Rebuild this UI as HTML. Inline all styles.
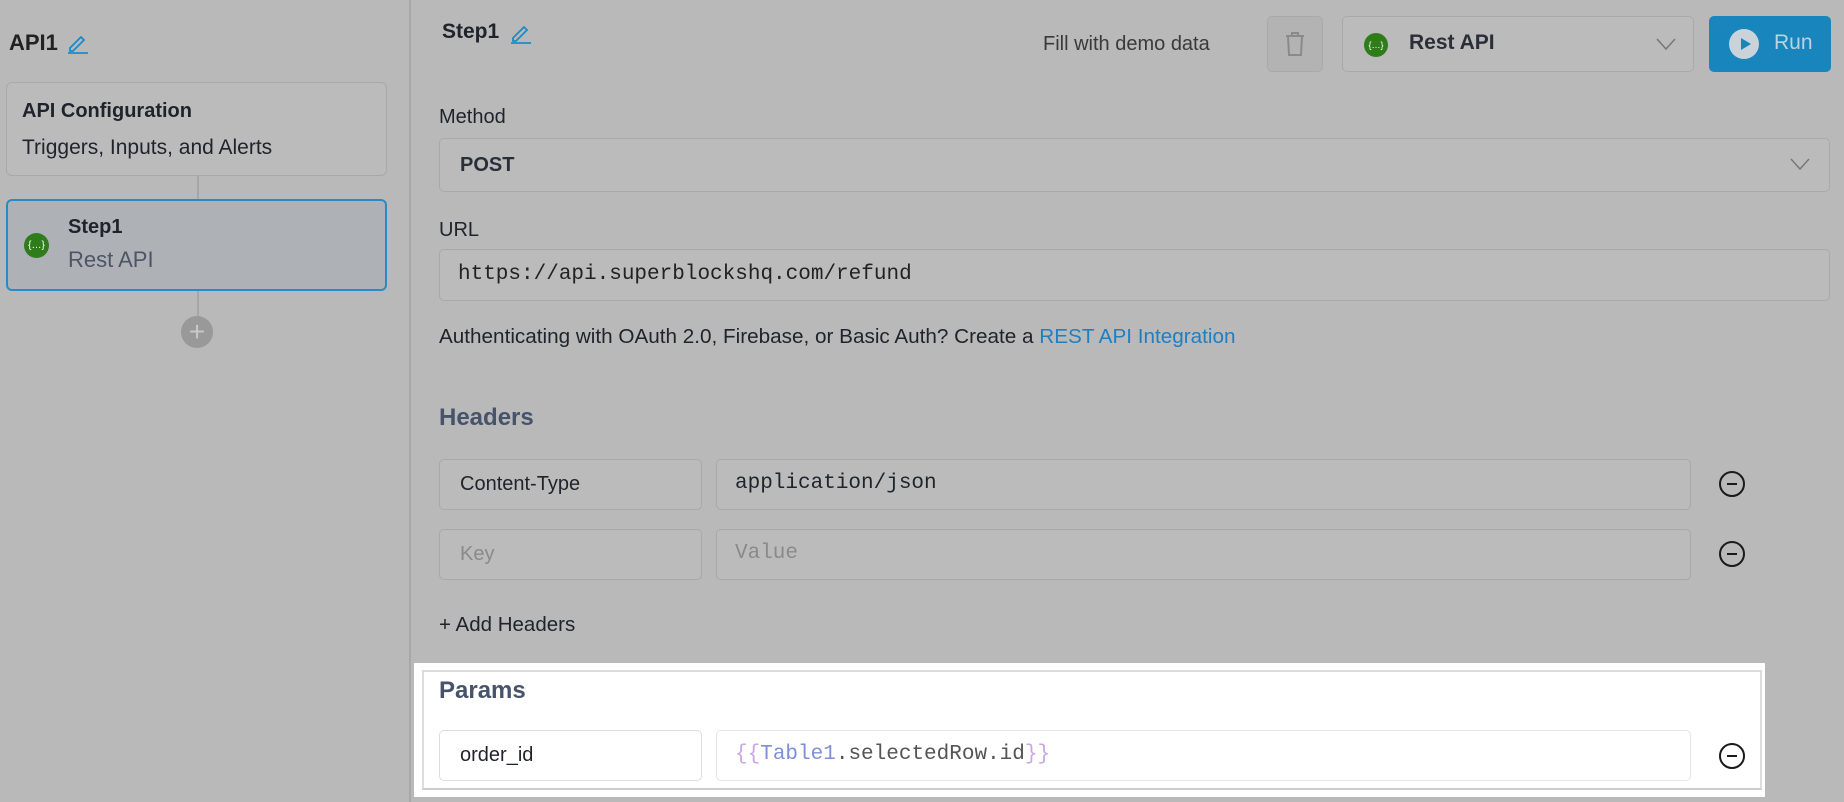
<!DOCTYPE html>
<html><head><meta charset="utf-8"><style>
*{box-sizing:border-box;margin:0;padding:0}
body{width:1844px;height:802px;background:#b9b9b9;font-family:"Liberation Sans",sans-serif;color:#1f232b;position:relative;overflow:hidden}
.a{position:absolute;white-space:nowrap}
.box{position:absolute;border:1.5px solid #a9a9a9;border-radius:5px;background:#bbbbbb}
.mono{font-family:"Liberation Mono",monospace}
.minus{position:absolute;width:26px;height:26px;border:2px solid #1a1a1a;border-radius:50%}
.minus:after{content:"";position:absolute;left:6px;right:6px;top:10px;height:2px;background:#1a1a1a}
.lbl{font-size:20px}
</style></head><body>
<div class="a" style="left:409px;top:0;width:2px;height:802px;background:#a8a8a8"></div>
<div class="a" style="left:9px;top:30px;font-size:22px;font-weight:bold;color:#222">API1</div>
<svg class="a" style="left:66px;top:31px" width="24" height="24" viewBox="0 0 24 24" fill="none" stroke="#1e8ac6" stroke-width="1.8"><path d="M4 17 L15 6 L18 9 L7 20 L4 20 Z"/><path d="M2 22 H22"/></svg>
<div class="box" style="left:6px;top:82px;width:381px;height:94px;border-radius:6px"></div>
<div class="a" style="left:22px;top:100px;font-size:20px;font-weight:bold">API Configuration</div>
<div class="a" style="left:22px;top:136px;font-size:21px">Triggers, Inputs, and Alerts</div>
<div class="a" style="left:197px;top:176px;width:2px;height:24px;background:#a6a6a6"></div>
<div class="a" style="left:6px;top:199px;width:381px;height:92px;border:2px solid #2a8bc4;border-radius:6px;background:#aeb2b7"></div>
<div class="a" style="left:24px;top:233px;width:25px;height:25px;border-radius:50%;background:#2e7d1a;color:#fff;font-size:10px;text-align:center;line-height:25px">{…}</div>
<div class="a" style="left:68px;top:216px;font-size:20px;font-weight:bold">Step1</div>
<div class="a" style="left:68px;top:247px;font-size:22px;color:#4d5566">Rest API</div>
<div class="a" style="left:197px;top:291px;width:2px;height:27px;background:#a6a6a6"></div>
<div class="a" style="left:181px;top:316px;width:32px;height:32px;border-radius:50%;background:#999;color:#c8c8c8;font-size:28px;text-align:center;line-height:31px">+</div>

<div class="a" style="left:442px;top:20px;font-size:21px;font-weight:bold">Step1</div>
<svg class="a" style="left:509px;top:21px" width="24" height="24" viewBox="0 0 24 24" fill="none" stroke="#1e8ac6" stroke-width="1.8"><path d="M4 17 L15 6 L18 9 L7 20 L4 20 Z"/><path d="M2 22 H22"/></svg>
<div class="a" style="left:1043px;top:33px;font-size:20px;color:#3a3a3a">Fill with demo data</div>
<div class="box" style="left:1267px;top:16px;width:56px;height:56px;background:#b3b3b3"></div>
<svg class="a" style="left:1283px;top:31px" width="24" height="26" viewBox="0 0 24 26" fill="none" stroke="#8a8a8a" stroke-width="2"><path d="M3 5 H21 M9 5 V2 H15 V5 M5 5 L6 24 H18 L19 5"/></svg>
<div class="box" style="left:1342px;top:16px;width:352px;height:56px"></div>
<div class="a" style="left:1364px;top:33px;width:24px;height:24px;border-radius:50%;background:#2e7d1a;color:#fff;font-size:9px;text-align:center;line-height:24px">{…}</div>
<div class="a" style="left:1409px;top:31px;font-size:21px;font-weight:bold;color:#2a2e38">Rest API</div>
<svg class="a" style="left:1656px;top:38px" width="20" height="12" viewBox="0 0 20 12" fill="none" stroke="#777" stroke-width="1.5"><path d="M1 1 L10 11 L19 1"/></svg>
<div class="a" style="left:1709px;top:16px;width:122px;height:56px;border-radius:5px;background:#1886bd"></div>
<div class="a" style="left:1729px;top:29px;width:30px;height:30px;border-radius:50%;background:#c9d3d9"></div>
<svg class="a" style="left:1740px;top:37px" width="12" height="14" viewBox="0 0 12 14"><path d="M1 1 L11 7 L1 13Z" fill="#1886bd"/></svg>
<div class="a" style="left:1774px;top:31px;font-size:21px;color:#bcd2e0">Run</div>

<div class="a lbl" style="left:439px;top:106px">Method</div>
<div class="box" style="left:439px;top:138px;width:1391px;height:54px"></div>
<div class="a" style="left:460px;top:154px;font-size:20px;font-weight:bold;color:#2a2e38">POST</div>
<svg class="a" style="left:1790px;top:158px" width="20" height="12" viewBox="0 0 20 12" fill="none" stroke="#777" stroke-width="1.5"><path d="M1 1 L10 11 L19 1"/></svg>
<div class="a lbl" style="left:439px;top:219px">URL</div>
<div class="box" style="left:439px;top:249px;width:1391px;height:52px"></div>
<div class="a mono" style="left:458px;top:263px;font-size:21px;color:#222">https://api.superblockshq.com/refund</div>
<div class="a" style="left:439px;top:325px;font-size:20.7px">Authenticating with OAuth 2.0, Firebase, or Basic Auth? Create a <span style="color:#1f7fbf">REST API Integration</span></div>
<div class="a" style="left:439px;top:404px;font-size:24px;font-weight:bold;color:#46536a">Headers</div>
<div class="box" style="left:439px;top:459px;width:263px;height:51px"></div>
<div class="a" style="left:460px;top:473px;font-size:20px">Content-Type</div>
<div class="box" style="left:716px;top:459px;width:975px;height:51px"></div>
<div class="a mono" style="left:735px;top:472px;font-size:21px">application/json</div>
<div class="minus" style="left:1719px;top:471px"></div>
<div class="box" style="left:439px;top:529px;width:263px;height:51px"></div>
<div class="a" style="left:460px;top:543px;font-size:20px;color:#8a8a8a">Key</div>
<div class="box" style="left:716px;top:529px;width:975px;height:51px"></div>
<div class="a mono" style="left:735px;top:542px;font-size:21px;color:#8a8a8a">Value</div>
<div class="minus" style="left:1719px;top:541px"></div>
<div class="a" style="left:439px;top:613px;font-size:20.5px">+ Add Headers</div>

<div class="a" style="left:414px;top:663px;width:1351px;height:134px;background:#fff"></div>
<div class="a" style="left:422px;top:670px;width:1340px;height:120px;border:2px solid #dcdcdc;border-bottom-color:#ccc"></div>
<div class="a" style="left:439px;top:677px;font-size:24px;font-weight:bold;color:#46536a">Params</div>
<div class="a" style="left:439px;top:730px;width:263px;height:51px;border:1.5px solid #ddd;border-radius:5px"></div>
<div class="a" style="left:460px;top:744px;font-size:20px">order_id</div>
<div class="a" style="left:716px;top:730px;width:975px;height:51px;border:1.5px solid #e6e6e6;border-radius:5px"></div>
<div class="a mono" style="left:735px;top:743px;font-size:21px;color:#555"><span style="color:#c9a6e6">{{</span><span style="color:#7f8fd6">Table1</span>.selectedRow.id<span style="color:#c9a6e6">}}</span></div>
<div class="minus" style="left:1719px;top:743px"></div>
</body></html>
